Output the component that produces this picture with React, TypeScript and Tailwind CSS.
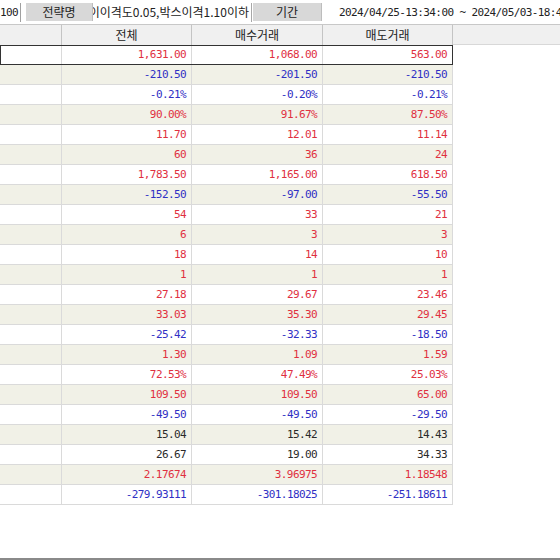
import React from "react";

type C = "r" | "b" | "k";
const rows: [string, string, string, C][] = [
  ["1,631.00", "1,068.00", "563.00", "r"],
  ["-210.50", "-201.50", "-210.50", "b"],
  ["-0.21%", "-0.20%", "-0.21%", "b"],
  ["90.00%", "91.67%", "87.50%", "r"],
  ["11.70", "12.01", "11.14", "r"],
  ["60", "36", "24", "r"],
  ["1,783.50", "1,165.00", "618.50", "r"],
  ["-152.50", "-97.00", "-55.50", "b"],
  ["54", "33", "21", "r"],
  ["6", "3", "3", "r"],
  ["18", "14", "10", "r"],
  ["1", "1", "1", "r"],
  ["27.18", "29.67", "23.46", "r"],
  ["33.03", "35.30", "29.45", "r"],
  ["-25.42", "-32.33", "-18.50", "b"],
  ["1.30", "1.09", "1.59", "r"],
  ["72.53%", "47.49%", "25.03%", "r"],
  ["109.50", "109.50", "65.00", "r"],
  ["-49.50", "-49.50", "-29.50", "b"],
  ["15.04", "15.42", "14.43", "k"],
  ["26.67", "19.00", "34.33", "k"],
  ["2.17674", "3.96975", "1.18548", "r"],
  ["-279.93111", "-301.18025", "-251.18611", "b"],
];

const colorCls: Record<C, string> = {
  r: "text-[#e0303f]",
  b: "text-[#3030c4]",
  k: "text-[#2a2a2a]",
};

const mono = "font-['DejaVu_Sans_Mono',monospace] text-[11px] tracking-[-0.6px] leading-none";
const kr = "font-['Noto_Sans_CJK_KR',sans-serif] text-[12px] leading-none";

export default function App() {
  return (
    <div className="w-[560px] h-[560px] overflow-hidden bg-white flex flex-col relative">
      {/* top bar */}
      <div className="h-[25px] flex items-center border-b border-[#c8c8c8] shrink-0">
        <div className={`w-[21px] h-[19px] flex items-center justify-end pr-[2px] border-r border-[#a0a0a0] text-[#222] ${mono}`}>
          100
        </div>
        <div className="w-[5px]" />
        <div className={`w-[67px] h-[18px] bg-[#d8d8d8] border-r border-[#bdbdbd] flex items-center justify-center text-[#222] ${kr}`}>
          전략명
        </div>
        <div className="w-[159px] h-[19px] flex items-center justify-end overflow-hidden border-r border-[#a8a8a8] pr-[2px]">
          <span className={`whitespace-nowrap text-[#222] ${kr}`}>이이격도0.05,박스이격1.10이하</span>
        </div>
        <div className="w-[1px]" />
        <div className={`w-[69px] h-[18px] bg-[#d8d8d8] border-r border-[#bdbdbd] flex items-center justify-center text-[#222] ${kr}`}>
          기간
        </div>
        <div className="flex-1 h-[19px] flex items-center pl-[17px] overflow-hidden">
          <span className={`whitespace-nowrap text-[#222] ${mono}`}>2024/04/25-13:34:00 ~ 2024/05/03-18:40:00</span>
        </div>
      </div>

      {/* header */}
      <div className="h-[20px] flex bg-[#f0f0f0] shrink-0">
        <div className="w-[62px] h-full border-r border-[#c4c4c4]" />
        <div className={`w-[130px] h-full border-r border-[#c4c4c4] flex items-center justify-center text-[#222] ${kr}`}>전체</div>
        <div className={`w-[131px] h-full border-r border-[#c4c4c4] flex items-center justify-center text-[#222] ${kr}`}>매수거래</div>
        <div className={`w-[130px] h-full border-r border-[#c4c4c4] flex items-center justify-center text-[#222] ${kr}`}>매도거래</div>
        <div className="flex-1 h-full border-b border-[#d8d8d8]" />
      </div>

      {/* rows */}
      <div className="w-[453px] flex flex-col">
        {rows.map((r, i) => {
          const bg = i % 2 === 1 ? "bg-[#f1f1e7]" : "bg-white";
          const sel = i === 0 ? "outline outline-[#333333] -outline-offset-1" : "";
          return (
            <div key={i} className={`h-[20px] flex ${bg} ${sel}`}>
              <div className="w-[62px] h-full border-r border-b border-[#dadada]" />
              {[r[0], r[1], r[2]].map((v, j) => (
                <div
                  key={j}
                  className={`${j === 1 ? "w-[131px]" : "w-[130px]"} h-full border-r border-b border-[#dadada] flex items-center justify-end pr-[5px] ${mono} ${colorCls[r[3]]}`}
                >
                  {v}
                </div>
              ))}
            </div>
          );
        })}
      </div>

      <div className="absolute left-0 right-0 bottom-0 h-[2px] bg-[#8a8a8a]" />
    </div>
  );
}
